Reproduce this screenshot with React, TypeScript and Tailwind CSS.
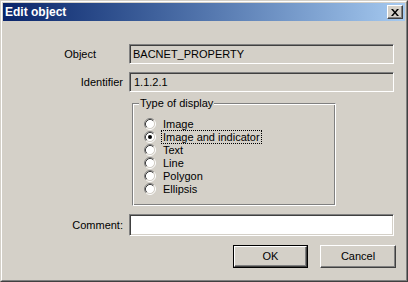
import { useState } from "react";

const options = ["Image", "Image and indicator", "Text", "Line", "Polygon", "Ellipsis"];

function Radio({ checked }: { checked: boolean }) {
  return (
    <svg width="12" height="12" viewBox="0 0 12 12" className="shrink-0">
      <circle cx="6" cy="6" r="4.5" fill="#ffffff" />
      <path d="M2.11 9.89 A5.5 5.5 0 0 1 9.89 2.11" fill="none" stroke="#808080" strokeWidth="1" />
      <path d="M9.89 2.11 A5.5 5.5 0 0 1 2.11 9.89" fill="none" stroke="#ffffff" strokeWidth="1" />
      <path d="M2.82 9.18 A4.5 4.5 0 0 1 9.18 2.82" fill="none" stroke="#404040" strokeWidth="1" />
      <path d="M9.18 2.82 A4.5 4.5 0 0 1 2.82 9.18" fill="none" stroke="#d4d0c8" strokeWidth="1" />
      {checked && <circle cx="6" cy="6" r="2" fill="#000000" />}
    </svg>
  );
}

export default function App() {
  const [kind, setKind] = useState(1);
  const [comment, setComment] = useState("");
  const sunken =
    "border border-t-[#808080] border-l-[#808080] border-b-white border-r-white shadow-[inset_1px_1px_0_#404040,inset_-1px_-1px_0_#d4d0c8]";
  const raised =
    "border border-t-white border-l-white border-b-[#404040] border-r-[#404040] shadow-[inset_-1px_-1px_0_#808080]";

  return (
    <div
      className="w-[408px] h-[282px] bg-[#d4d0c8] text-black text-[11px] border border-t-[#d4d0c8] border-l-[#d4d0c8] border-b-[#404040] border-r-[#404040]"
      style={{ fontFamily: '"Liberation Sans", Arial, sans-serif' }}
    >
      <div className="h-full border border-t-white border-l-white border-b-[#808080] border-r-[#808080] p-px flex flex-col">
        <div className="h-[18px] flex items-center justify-between pl-[2px] pr-[2px] bg-linear-to-r from-[#0a246a] to-[#a6caf0]">
          <span className="text-white font-bold text-[12px] leading-none">Edit object</span>
          <button
            className={`w-[16px] h-[14px] bg-[#d4d0c8] flex items-center justify-center ${raised}`}
          >
            <svg width="8" height="7" viewBox="0 0 8 7">
              <path d="M0 0h2l2 2.5L6 0h2L5 3.5 8 7H6L4 4.5 2 7H0l3-3.5z" fill="#000" />
            </svg>
          </button>
        </div>

        <div className="flex flex-col pt-[23px]">
          <div className="flex items-center">
            <span className="w-[126px] text-right pr-[33px]">Object</span>
            <div className={`w-[265px] h-[20px] flex items-center pl-[3px] ${sunken}`}>
              BACNET_PROPERTY
            </div>
          </div>

          <div className="flex items-center mt-[8px]">
            <span className="w-[126px] text-right pr-[6px]">Identifier</span>
            <div className={`w-[265px] h-[20px] flex items-center pl-[4px] ${sunken}`}>1.1.2.1</div>
          </div>

          <div className="ml-[129px] mt-[11px] w-[204px] h-[103px] relative border border-t-[#808080] border-l-[#808080] border-b-white border-r-white shadow-[inset_1px_1px_0_#ffffff,inset_-1px_-1px_0_#808080]">
            <span className="absolute -top-[7px] left-[6px] px-px bg-[#d4d0c8] leading-[13px]">
              Type of display
            </span>
            <div className="flex flex-col pt-[13px] pl-[11px]">
              {options.map((o, i) => (
                <label
                  key={o}
                  className="h-[13px] flex items-center cursor-default"
                  onClick={() => setKind(i)}
                >
                  <Radio checked={kind === i} />
                  <span
                    className={`ml-[5px] px-px leading-[12px] border border-dotted ${
                      kind === i ? "border-black" : "border-transparent"
                    }`}
                  >
                    {o}
                  </span>
                </label>
              ))}
            </div>
          </div>

          <div className="flex items-center mt-[8px]">
            <span className="w-[126px] text-right pr-[6px]">Comment:</span>
            <input
              value={comment}
              onChange={(e) => setComment(e.target.value)}
              className={`w-[265px] h-[22px] bg-white px-[3px] outline-none ${sunken}`}
            />
          </div>

          <div className="flex justify-end gap-[12px] mt-[9px] pr-[9px]">
            <button className="w-[75px] h-[23px] border border-black">
              <div className={`w-full h-full flex items-center justify-center ${raised}`}>OK</div>
            </button>
            <button className={`w-[76px] h-[23px] flex items-center justify-center ${raised}`}>
              Cancel
            </button>
          </div>
        </div>
      </div>
    </div>
  );
}
